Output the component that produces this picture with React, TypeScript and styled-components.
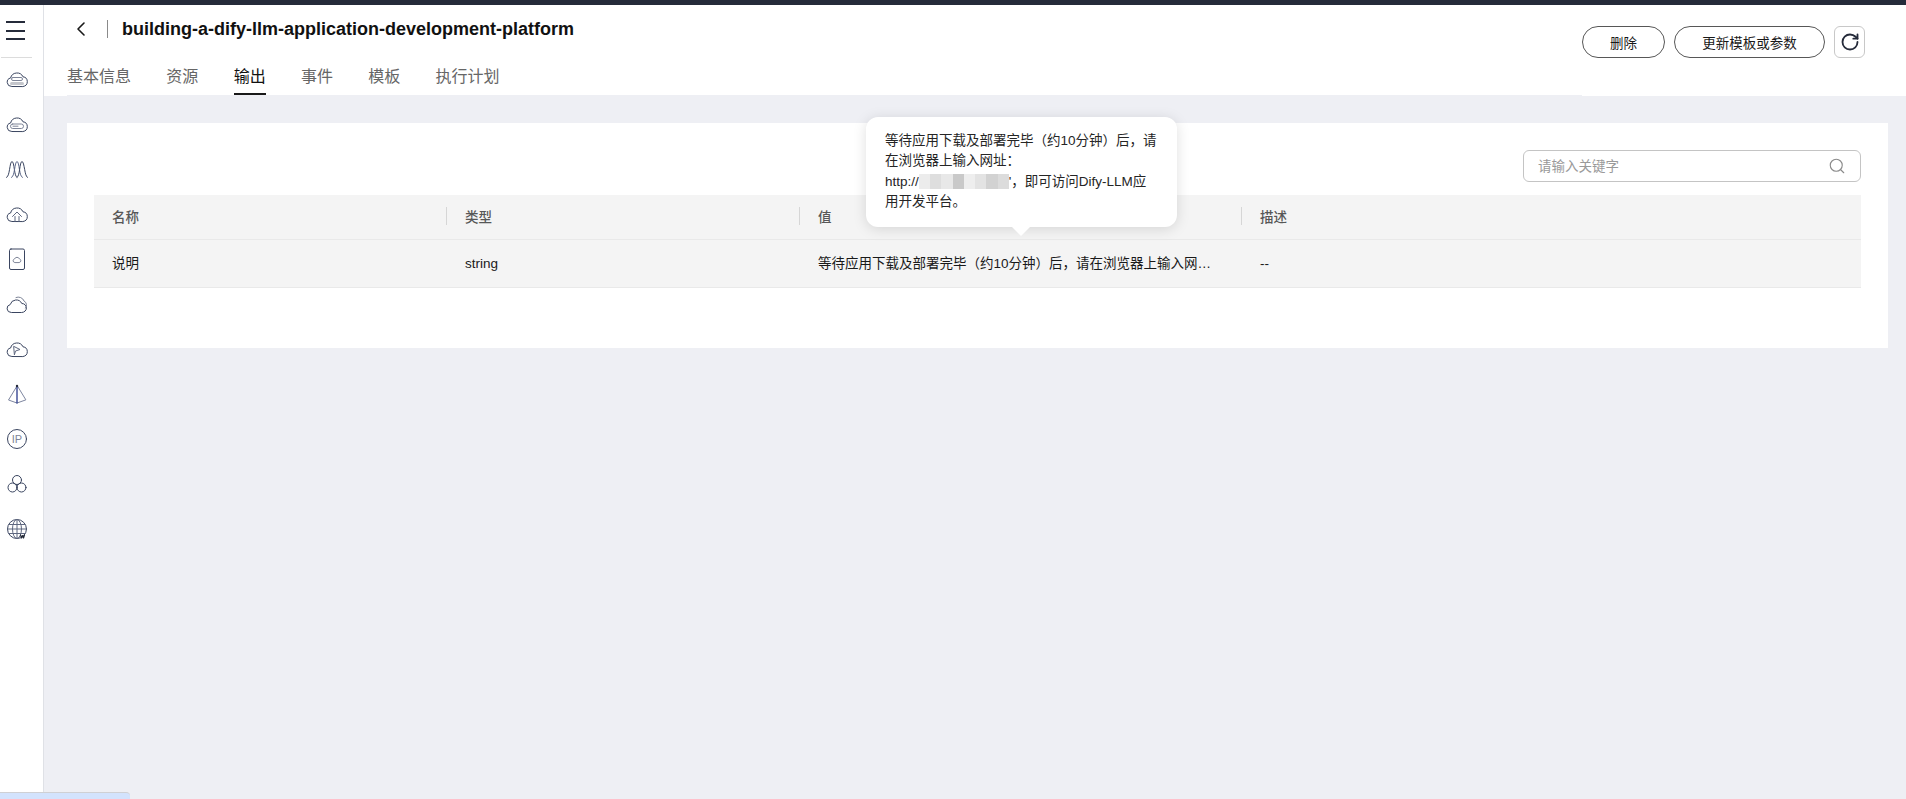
import React from "react";
import styled, { createGlobalStyle } from "styled-components";
import { ChevronLeft, RotateCw, Search } from "lucide-react";

const Global = createGlobalStyle`
  html, body { margin: 0; padding: 0; height: 100%; background: #eeeff4; }
  body { font-family: "Liberation Sans", "Noto Sans CJK SC", sans-serif; font-size: 13.5px; color: #191919; overflow: hidden; }
  * { box-sizing: border-box; }
`;

const Page = styled.div`
  display: flex;
  flex-direction: column;
  height: 799px;
  position: relative;
`;
const TopBar = styled.div`
  height: 5px;
  flex: none;
  background: #252b3a;
`;
const Body = styled.div`
  display: flex;
  flex: 1;
  min-height: 0;
`;
const Sidebar = styled.aside`
  width: 44px;
  flex: none;
  background: #fff;
  border-right: 1px solid #dfe1e6;
`;
const MenuButton = styled.div`
  height: 52px;
  width: 31px;
  padding: 16px 0 0 6px;
  display: flex;
  flex-direction: column;
  gap: 6.5px;
`;
const MenuLine = styled.span`
  display: block;
  width: 19px;
  height: 2px;
  background: #252b3a;
`;
const SideDivider = styled.div`
  height: 1px;
  width: 31px;
  margin-left: 1px;
  background: #dcdcdc;
`;
const IconList = styled.div`
  display: flex;
  flex-direction: column;
  width: 33px;
  margin-top: -2px;
`;
const IconCell = styled.div`
  height: 45px;
  display: flex;
  align-items: center;
  justify-content: center;
  svg { display: block; }
`;
const Main = styled.main`
  flex: 1;
  min-width: 0;
  display: flex;
  flex-direction: column;
`;
const Header = styled.header`
  height: 91px;
  flex: none;
  background: #fff;
  display: flex;
  justify-content: space-between;
  padding: 0 41px 0 23px;
`;
const HeaderLeft = styled.div`
  width: 1515px;
  display: flex;
  flex-direction: column;
`;
const TitleRow = styled.div`
  height: 48px;
  display: flex;
  align-items: center;
  color: #191919;
  svg { margin-left: 2px; flex: none; }
`;
const TitleSep = styled.span`
  width: 1px;
  height: 18px;
  background: #8a8a8a;
  margin: 0 14px 0 14px;
`;
const Title = styled.h1`
  margin: 0;
  font-size: 18px;
  font-weight: 700;
  color: #111;
`;
const Tabs = styled.nav`
  height: 43px;
  display: flex;
  gap: 35.3px;
  border-bottom: 1px solid #eeeff4;
`;
const Tab = styled.div<{ $active?: boolean }>`
  height: 42px;
  padding-top: 3px;
  display: flex;
  align-items: center;
  font-size: 16px;
  color: ${(p) => (p.$active ? "#111" : "#666")};
  border-bottom: 2px solid ${(p) => (p.$active ? "#191919" : "transparent")};
`;
const Actions = styled.div`
  display: flex;
  align-items: flex-start;
  gap: 9px;
  padding-top: 21px;
`;
const PillButton = styled.button<{ $w: number }>`
  width: ${(p) => p.$w}px;
  height: 32px;
  border: 1px solid #575757;
  border-radius: 16px;
  background: #fff;
  color: #191919;
  font: inherit;
  padding: 0;
`;
const IconButton = styled.button`
  width: 31px;
  height: 32px;
  border: 1px solid #c8c8c8;
  border-radius: 6px;
  background: #fff;
  color: #252b3a;
  padding: 0;
  display: flex;
  align-items: center;
  justify-content: center;
`;
const Content = styled.div`
  flex: 1;
  padding: 27px 18px 0 23px;
`;
const Card = styled.section`
  position: relative;
  height: 225px;
  background: #fff;
  padding: 27px 27px 0;
`;
const Toolbar = styled.div`
  height: 32px;
  margin-bottom: 13px;
  display: flex;
  justify-content: flex-end;
`;
const SearchBox = styled.div`
  width: 338px;
  height: 32px;
  border: 1px solid #c4c4c4;
  border-radius: 6px;
  display: flex;
  align-items: center;
  padding: 0 14px 0 14px;
  color: #8a8a8a;
`;
const SearchInput = styled.input`
  flex: 1;
  min-width: 0;
  border: 0;
  outline: 0;
  padding: 0;
  background: transparent;
  font: inherit;
  &::placeholder { color: #9a9a9a; opacity: 1; }
`;
const columns = "353px 353px 442px 1fr";
const HeadRow = styled.div`
  display: grid;
  grid-template-columns: ${columns};
  height: 45px;
  background: #f4f4f4;
  border-bottom: 1px solid #e9e9e9;
`;
const HeadCell = styled.div`
  display: flex;
  align-items: center;
  color: #575757;
  font-weight: 500;
  padding: 0 0 3px 18px;
`;
const HeadDivider = styled.span`
  width: 1px;
  height: 18px;
  background: #d6d6d6;
  margin: 0 18px 0 -19px;
`;
const DataRow = styled.div`
  display: grid;
  grid-template-columns: ${columns};
  height: 48px;
  background: #f4f4f4;
  border-bottom: 1px solid #e9e9e9;
`;
const DataCell = styled.div`
  line-height: 47px;
  padding: 0 19px 0 18px;
  white-space: nowrap;
  overflow: hidden;
  color: #191919;
`;
const Tooltip = styled.div`
  position: absolute;
  left: 799px;
  top: -6px;
  width: 311px;
  height: 110px;
  padding: 14px 19px 0;
  background: #fff;
  border-radius: 12px;
  box-shadow: 0 2px 14px rgba(0, 0, 0, 0.13);
  line-height: 20.3px;
  white-space: nowrap;
  color: #252525;
  &::after {
    content: "";
    position: absolute;
    left: 146px;
    bottom: -9px;
    width: 0;
    height: 0;
    border-left: 9px solid transparent;
    border-right: 9px solid transparent;
    border-top: 9px solid #fff;
  }
`;
const Mosaic = styled.span`
  display: inline-flex;
  width: 90px;
  height: 15px;
  vertical-align: -3px;
  filter: blur(0.5px);
`;
const MosaicTile = styled.span<{ $c: string }>`
  flex: 1;
  background: ${(p) => p.$c};
`;
const BottomStrip = styled.div`
  position: absolute;
  left: 0;
  bottom: 0;
  width: 130px;
  height: 7px;
  background: #d3e3fd;
  border-top: 1px solid #cfd0d4;
  border-top-right-radius: 4px;
`;

const S = { fill: "none", stroke: "#3a4560", strokeWidth: 1, strokeLinecap: "round" as const, strokeLinejoin: "round" as const };
const cloud = "M6.500 19.500a4.300 4.300 0 0 1-.9-8.500A6.600 6.600 0 0 1 18 9.800 4.900 4.900 0 0 1 18.200 19.500Z";

const Icon: React.FC<{ children: React.ReactNode }> = ({ children }) => (
  <IconCell>
    <svg width="24" height="24" viewBox="0 0 24 24" {...S}>{children}</svg>
  </IconCell>
);

const icons = [
  <>
    <path d={cloud} />
    <rect x="6.500" y="10.500" width="11" height="3" rx="1.500" stroke="#7e8598" />
    <path d="M6.500 16.500h11" stroke="#c4c6cc" strokeWidth="3" />
  </>,
  <>
    <path d={cloud} />
    <rect x="5.500" y="12" width="13" height="4.500" rx="2.200" stroke="#7e8598" />
    <path d="M8 14.200h5" stroke="#7e8598" />
  </>,
  <>
    <path d="M1.500 20.500C5 20 4.500 4.500 7 4.500S9 20 12 20.500" />
    <path d="M6.500 20.500C10 20 9.500 4.500 12 4.500S14 20 17.500 20.500" stroke="#5f6a8c" />
    <path d="M12 20.500C15 20 14.500 4.500 17 4.500S19.500 20 22.500 20.500" />
  </>,
  <>
    <path d={cloud} />
    <path d="M7.500 14.500l4.500-4.500 4.500 4.500M10 14.500v5M14 14.500v5" stroke="#5f6880" />
  </>,
  <>
    <rect x="4.500" y="2" width="15" height="20.500" rx="1.500" />
    <path d="M9.500 15.500a1.800 1.800 0 0 1 0-3.500 2.700 2.700 0 0 1 5 0 1.800 1.800 0 0 1 0 3.500Z" stroke="#7e8598" />
  </>,
  <>
    <path d="M6 20.500a4 4 0 0 1-.8-7.900A6.200 6.200 0 0 1 16.800 11.500 4.500 4.500 0 0 1 17 20.500Z" />
    <path d="M11 5.500a6 6 0 0 1 8 3.500 4.500 4.500 0 0 1 1.500 7" stroke="#7e8598" />
  </>,
  <>
    <path d={cloud} />
    <path d="M9 9.500l6 3-4.500 1.500-1 3.500Z" stroke="#5f6880" />
  </>,
  <>
    <path d="M12 4L3.500 18 12 21l8.500-3Z" stroke="#7e86a0" />
    <path d="M12 4v17" strokeWidth="1.300" stroke="#2a3a8c" />
    <circle cx="12" cy="4" r="1.200" fill="#252b3a" stroke="none" />
  </>,
  <>
    <circle cx="12" cy="12" r="9.500" />
    <text x="12" y="16" textAnchor="middle" fontSize="11" fontFamily="Liberation Sans" fill="#7e8598" stroke="none">IP</text>
  </>,
  <>
    <circle cx="12" cy="8" r="4.500" />
    <circle cx="7.500" cy="15.500" r="4.500" />
    <circle cx="16.500" cy="15.500" r="4.500" />
  </>,
  <>
    <circle cx="12" cy="12" r="9.500" />
    <ellipse cx="12" cy="12" rx="4.500" ry="9.500" stroke="#5f6880" />
    <path d="M2.500 12h19M3.800 7.500h16.400M3.800 16.500h16.400M12 2.500v19" stroke="#5f6880" />
    <path d="M15.500 18l1 3 1-2.500 1 2.500 1-3" strokeWidth="1.200" stroke="#252b3a" />
  </>,
];

const tabs = ["基本信息", "资源", "输出", "事件", "模板", "执行计划"];
const mosaic = ["#ececec", "#dedede", "#e8e8e8", "#c9c9c9", "#eeeeee", "#e3e3e3", "#d2d2d2", "#dcdcdc"];

export default function App() {
  return (
    <Page>
      <Global />
      <TopBar />
      <Body>
        <Sidebar>
          <MenuButton>
            <MenuLine />
            <MenuLine />
            <MenuLine />
          </MenuButton>
          <SideDivider />
          <IconList>
            {icons.map((ic, i) => (
              <Icon key={i}>{ic}</Icon>
            ))}
          </IconList>
        </Sidebar>
        <Main>
          <Header>
            <HeaderLeft>
              <TitleRow>
                <ChevronLeft size={24} strokeWidth={1.6} />
                <TitleSep />
                <Title>building-a-dify-llm-application-development-platform</Title>
              </TitleRow>
              <Tabs>
                {tabs.map((t) => (
                  <Tab key={t} $active={t === "输出"}>{t}</Tab>
                ))}
              </Tabs>
            </HeaderLeft>
            <Actions>
              <PillButton $w={83}>删除</PillButton>
              <PillButton $w={151}>更新模板或参数</PillButton>
              <IconButton><RotateCw size={20} strokeWidth={2.2} /></IconButton>
            </Actions>
          </Header>
          <Content>
            <Card>
              <Toolbar>
                <SearchBox>
                  <SearchInput placeholder="请输入关键字" />
                  <Search size={18} strokeWidth={1.5} />
                </SearchBox>
              </Toolbar>
              <HeadRow>
                <HeadCell>名称</HeadCell>
                <HeadCell><HeadDivider />类型</HeadCell>
                <HeadCell><HeadDivider />值</HeadCell>
                <HeadCell><HeadDivider />描述</HeadCell>
              </HeadRow>
              <DataRow>
                <DataCell>说明</DataCell>
                <DataCell>string</DataCell>
                <DataCell>等待应用下载及部署完毕（约10分钟）后，请在浏览器上输入网…</DataCell>
                <DataCell>--</DataCell>
              </DataRow>
              <Tooltip>
                等待应用下载及部署完毕（约10分钟）后，请<br />
                在浏览器上输入网址：<br />
                http://<Mosaic>{mosaic.map((c, i) => <MosaicTile key={i} $c={c} />)}</Mosaic>'，即可访问Dify-LLM应<br />
                用开发平台。
              </Tooltip>
            </Card>
          </Content>
        </Main>
      </Body>
      <BottomStrip />
    </Page>
  );
}
